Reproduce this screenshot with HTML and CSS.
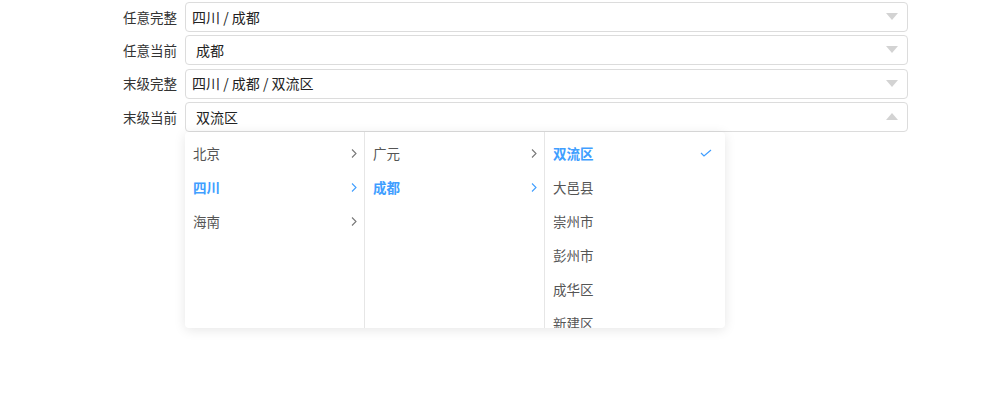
FILE: index.html
```html
<!DOCTYPE html>
<html lang="zh-CN">
<head>
<meta charset="utf-8">
<title>级联选择</title>
<link rel="stylesheet" href="styles.css">
</head>
<body>
<form class="form">
  <div class="row">
    <label class="label">任意完整</label>
    <div class="select"><span class="value">四川 / 成都</span><span class="caret down"></span></div>
  </div>
  <div class="row">
    <label class="label">任意当前</label>
    <div class="select"><span class="value indent">成都</span><span class="caret down"></span></div>
  </div>
  <div class="row">
    <label class="label">末级完整</label>
    <div class="select"><span class="value">四川 / 成都 / 双流区</span><span class="caret down"></span></div>
  </div>
  <div class="row">
    <label class="label">末级当前</label>
    <div class="select open">
      <span class="value indent">双流区</span><span class="caret up"></span>
      <div class="menu">
        <ul class="col">
          <li class="item">北京<svg class="arrow" viewBox="0 0 6 10"><path d="M1 1l4 4-4 4"/></svg></li>
          <li class="item active">四川<svg class="arrow" viewBox="0 0 6 10"><path d="M1 1l4 4-4 4"/></svg></li>
          <li class="item">海南<svg class="arrow" viewBox="0 0 6 10"><path d="M1 1l4 4-4 4"/></svg></li>
        </ul>
        <ul class="col">
          <li class="item">广元<svg class="arrow" viewBox="0 0 6 10"><path d="M1 1l4 4-4 4"/></svg></li>
          <li class="item active">成都<svg class="arrow" viewBox="0 0 6 10"><path d="M1 1l4 4-4 4"/></svg></li>
        </ul>
        <ul class="col">
          <li class="item active">双流区<svg class="check" viewBox="0 0 12 8"><path d="M1 4l3 3 7-6"/></svg></li>
          <li class="item">大邑县</li>
          <li class="item">崇州市</li>
          <li class="item">彭州市</li>
          <li class="item">成华区</li>
          <li class="item">新建区</li>
        </ul>
      </div>
    </div>
  </div>
</form>
</body>
</html>
```
FILE: styles.css
```css
html, body {
  margin: 0;
  background: #fff;
}

body {
  min-height: 100vh;
  font-family: "Noto Sans CJK SC", "Noto Sans", sans-serif;
  font-size: 14px;
  color: #333;
}

.form {
  display: flex;
  flex-direction: column;
  gap: 3.4px;
  padding-top: 2px;
}

.row {
  display: flex;
  align-items: center;
  gap: 8px;
}

.label {
  width: 177px;
  text-align: right;
  color: #333;
  line-height: 20px;
  font-size: 13.5px;
  padding-bottom: 1px;
}

.select {
  position: relative;
  box-sizing: border-box;
  width: 723px;
  height: 30px;
  border: 1px solid #dcdcdc;
  border-radius: 4px;
  display: flex;
  align-items: center;
  padding: 0 9px 1px 6px;
  background: #fff;
}

.value {
  flex: 1;
  color: #222;
  line-height: 20px;
}

.value.indent {
  padding-left: 4px;
}

.caret {
  width: 0;
  height: 0;
  border-left: 6px solid transparent;
  border-right: 6px solid transparent;
}

.caret.down {
  border-top: 7px solid #d3d3d3;
}

.caret.up {
  border-bottom: 7px solid #d3d3d3;
}

/* popup panel below the open select */
.menu {
  position: absolute;
  left: -1px;
  top: 29px;
  width: 540px;
  height: 196px;
  display: flex;
  background: #fff;
  border-radius: 4px;
  box-shadow: 0 2px 12px rgba(0, 0, 0, 0.1);
  overflow: hidden;
  z-index: 5;
}

.col {
  list-style: none;
  margin: 0;
  padding: 4px 0 0;
  width: 180px;
  box-sizing: border-box;
  border-right: 1px solid #e6e6e6;
  overflow: hidden;
}

.col:last-child {
  border-right: 0;
}

.item {
  height: 34px;
  display: flex;
  align-items: center;
  justify-content: space-between;
  padding: 0 7px 0 8px;
  color: #555;
  font-size: 13.5px;
}

.item.active {
  color: #409eff;
  font-weight: bold;
}

.arrow {
  width: 6px;
  height: 11px;
  fill: none;
  stroke: #777;
  stroke-width: 1.1;
}

.item.active .arrow {
  stroke: #409eff;
}

.check {
  width: 12px;
  height: 8px;
  margin-right: 6px;
  fill: none;
  stroke: #409eff;
  stroke-width: 1.2;
}
```
